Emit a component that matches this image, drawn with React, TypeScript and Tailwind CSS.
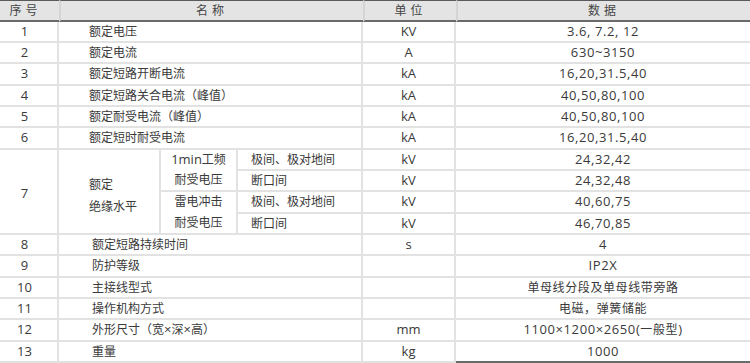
import React from "react";

// CJK runs are set at 12px, latin runs at 13px, as in the source sheet
const CJK = /([\u3000-\u303f\u4e00-\u9fff\uff00-\uffef]+)/;

const Txt: React.FC<{ children: string }> = ({ children }) => (
  <>
    {children.split(CJK).map((part, i) =>
      part === "" ? null : CJK.test(part) ? (
        <span key={i} className="text-[12px]">
          {part}
        </span>
      ) : (
        <span key={i} className="text-[13px]">
          {part}
        </span>
      )
    )}
  </>
);

const line = "border-b-2 border-[#e2e2e2]";
const vline = "border-r-2 border-[#e2e2e2]";
const last = "border-b-2 border-[#6a6a6a]";

interface Row {
  no: string;
  name: string;
  unit: string;
  value: string;
}

const topRows: Row[] = [
  { no: "1", name: "额定电压", unit: "KV", value: "3.6, 7.2, 12" },
  { no: "2", name: "额定电流", unit: "A", value: "630~3150" },
  { no: "3", name: "额定短路开断电流", unit: "kA", value: "16,20,31.5,40" },
  { no: "4", name: "额定短路关合电流（ 峰值 ）", unit: "kA", value: "40,50,80,100" },
  { no: "5", name: "额定耐受电流（ 峰值 ）", unit: "kA", value: "40,50,80,100" },
  { no: "6", name: "额定短时耐受电流", unit: "kA", value: "16,20,31.5,40" },
];

const bottomRows: Row[] = [
  { no: "8", name: "额定短路持续时间", unit: "s", value: "4" },
  { no: "9", name: "防护等级", unit: "", value: "IP2X" },
  { no: "10", name: "主接线型式", unit: "", value: "单母线分段及单母线带旁路" },
  { no: "11", name: "操作机构方式", unit: "", value: "电磁，弹簧储能" },
  { no: "12", name: "外形尺寸（ 宽×深×高 ）", unit: "mm", value: "1100×1200×2650(一般型)" },
  { no: "13", name: "重量", unit: "kg", value: "1000" },
];

const insulation = [
  { sub: ["1min工频", "耐受电压"], rows: [["极间、极对地间", "24,32,42"], ["断口间", "24,32,48"]] },
  { sub: ["雷电冲击", "耐受电压"], rows: [["极间、极对地间", "40,60,75"], ["断口间", "46,70,85"]] },
];

const SpecRow: React.FC<{ row: Row; isLast?: boolean; pad: string }> = ({ row, isLast, pad }) => {
  const b = isLast ? last : line;
  return (
    <>
      <div className={`flex items-center justify-center pr-[8px] ${b} ${vline}`}>
        <Txt>{row.no}</Txt>
      </div>
      <div className={`col-span-3 flex items-center ${pad} ${b} ${vline}`}>
        <Txt>{row.name}</Txt>
      </div>
      <div className={`flex items-center justify-center ${b} ${vline}`}>
        <Txt>{row.unit}</Txt>
      </div>
      <div className={`flex items-center justify-center tracking-[0.6px] ${b}`}>
        <Txt>{row.value}</Txt>
      </div>
    </>
  );
};

export default function App() {
  return (
    <div
      className="grid h-[363px] w-[750px] grid-cols-[59px_102px_77px_125px_93px_1fr] grid-rows-[22px_21px_21px_22px_21px_21px_22px_21px_21px_22px_21px_21px_22px_21px_21px_22px_21px] overflow-hidden bg-white text-[#3a3a3a]"
      style={{ fontFamily: '"Open Sans", "Noto Sans CJK SC", sans-serif' }}
    >
      {/* header */}
      <div className="flex items-center justify-center border-t border-b-2 border-t-[#5a5a5a] border-b-[#6a6a6a] bg-[#e4e4e4] pr-[8px] text-[#444]">
        <span className="text-[12px] tracking-[4px]">序号</span>
      </div>
      <div className="col-span-3 flex items-center justify-center border-t border-b-2 border-l-2 border-t-[#5a5a5a] border-b-[#6a6a6a] border-l-[#d4d4d4] bg-[#e4e4e4] text-[#444]">
        <span className="text-[12px] tracking-[4px]">名称</span>
      </div>
      <div className="flex items-center justify-center border-t border-b-2 border-l-2 border-t-[#5a5a5a] border-b-[#6a6a6a] border-l-[#d4d4d4] bg-[#e4e4e4] text-[#444]">
        <span className="text-[12px] tracking-[4px]">单位</span>
      </div>
      <div className="flex items-center justify-center border-t border-b-2 border-l-2 border-t-[#5a5a5a] border-b-[#6a6a6a] border-l-[#d4d4d4] bg-[#e4e4e4] text-[#444]">
        <span className="text-[12px] tracking-[4px]">数据</span>
      </div>

      {topRows.map((r) => (
        <SpecRow key={r.no} row={r} pad="pl-[30px]" />
      ))}

      {/* row 7: rated insulation level */}
      <div className={`row-span-4 flex items-center justify-center pt-[5px] pr-[8px] ${line} ${vline}`}>
        <Txt>7</Txt>
      </div>
      <div className={`row-span-4 flex flex-col justify-center pt-[8px] pl-[30px] leading-[22px] ${line} ${vline}`}>
        <Txt>额定</Txt>
        <Txt>绝缘水平</Txt>
      </div>
      {insulation.map((g, gi) => (
        <React.Fragment key={gi}>
          <div className={`row-span-2 flex flex-col ${line} ${vline}`}>
            <div className="flex h-[21px] items-center justify-center">
              <Txt>{g.sub[0]}</Txt>
            </div>
            <div className="flex h-[21px] items-center justify-center">
              <Txt>{g.sub[1]}</Txt>
            </div>
          </div>
          {g.rows.map(([label, value]) => (
            <React.Fragment key={label + value}>
              <div className={`flex items-center pl-[13px] ${line} ${vline}`}>
                <Txt>{label}</Txt>
              </div>
              <div className={`flex items-center justify-center ${line} ${vline}`}>
                <Txt>kV</Txt>
              </div>
              <div className={`flex items-center justify-center tracking-[0.6px] ${line}`}>
                <Txt>{value}</Txt>
              </div>
            </React.Fragment>
          ))}
        </React.Fragment>
      ))}

      {bottomRows.map((r, i) => (
        <SpecRow key={r.no} row={r} pad="pl-[33px]" isLast={i === bottomRows.length - 1} />
      ))}
    </div>
  );
}
